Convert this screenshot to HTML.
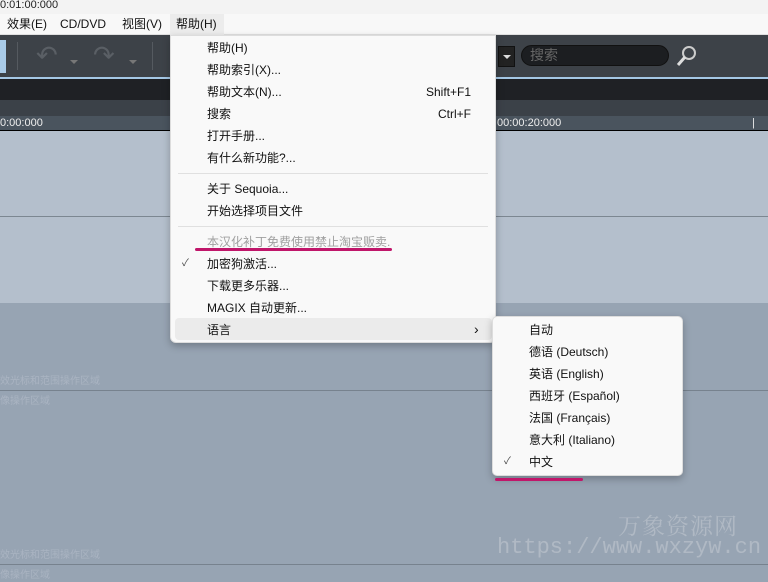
<!DOCTYPE html>
<html><head><meta charset="utf-8"><style>
*{margin:0;padding:0;box-sizing:border-box}
body{width:768px;height:582px;overflow:hidden;position:relative;font-family:"Liberation Sans","Noto Sans CJK SC",sans-serif;font-size:12px;background:#97a4b3;color:#111}
.a{position:absolute}
.mi{position:absolute;left:207px;font-size:12px;line-height:22px;top:0}
.sc{position:absolute;right:24px}
.si{position:absolute;left:529px;font-size:12px;line-height:22px}
.lbl{color:#aab4c2;font-size:10px}
</style></head><body>
<div class="a" style="left:0;top:0;width:768px;height:14px;background:#f3f3f3;font-size:11px;line-height:10px;color:#222">0:01:00:000</div>
<div class="a" style="left:0;top:14px;width:768px;height:21px;background:#f8f8f8;border-bottom:1px solid #e0e0e0"></div>
<div class="a" style="left:7px;top:16px;line-height:17px">效果(E)</div>
<div class="a" style="left:60px;top:16px;line-height:17px">CD/DVD</div>
<div class="a" style="left:122px;top:16px;line-height:17px">视图(V)</div>
<div class="a" style="left:170px;top:14px;width:54px;height:21px;background:#ececec"></div>
<div class="a" style="left:176px;top:16px;line-height:17px">帮助(H)</div>
<div class="a" style="left:0;top:35px;width:768px;height:42px;background:#3d4248"></div>
<div class="a" style="left:0;top:40px;width:6px;height:33px;background:#a9cbe8"></div>
<div class="a" style="left:17px;top:42px;width:1px;height:28px;background:#555a60"></div>
<div class="a" style="left:152px;top:42px;width:1px;height:28px;background:#555a60"></div>
<div class="a" style="left:36px;top:40px;font-size:26px;color:#5a5f65;line-height:30px">↶</div>
<div class="a" style="left:93px;top:40px;font-size:26px;color:#5a5f65;line-height:30px">↷</div>
<div class="a" style="left:70px;top:60px;border:4px solid transparent;border-top-color:#777"></div>
<div class="a" style="left:129px;top:60px;border:4px solid transparent;border-top-color:#777"></div>
<div class="a" style="left:498px;top:46px;width:17px;height:21px;background:#222;border:1px solid #111"></div>
<div class="a" style="left:503px;top:55px;border:4px solid transparent;border-top-color:#ddd"></div>
<div class="a" style="left:521px;top:45px;width:148px;height:21px;background:#1c1e21;border-radius:11px;border:1px solid #111;color:#666;font-size:14px;line-height:19px;padding-left:8px">搜索</div>
<svg class="a" style="left:675px;top:44px" width="24" height="24"><circle cx="14" cy="9" r="6" fill="none" stroke="#ccc" stroke-width="2"/><line x1="10" y1="13" x2="3" y2="21" stroke="#ddd" stroke-width="3"/></svg>
<div class="a" style="left:0;top:77px;width:768px;height:2px;background:#a5c8e6"></div>
<div class="a" style="left:0;top:79px;width:768px;height:21px;background:#1f2125"></div>
<div class="a" style="left:0;top:100px;width:768px;height:16px;background:#3b4148"></div>
<div class="a" style="left:0;top:116px;width:768px;height:14px;background:#4a545e"></div>
<div class="a" style="left:0;top:116px;color:#eee;font-size:11px;line-height:14px">0:00:000</div>
<div class="a" style="left:497px;top:116px;color:#eee;font-size:11px;line-height:14px">00:00:20:000</div>
<div class="a" style="left:752px;top:116px;color:#eee;font-size:11px;line-height:14px">| 00</div>
<div class="a" style="left:0;top:130px;width:768px;height:1px;background:#000"></div>
<div class="a" style="left:0;top:131px;width:768px;height:172px;background:#b4bfcc"></div>
<div class="a" style="left:0;top:216px;width:768px;height:1px;background:#7c8791"></div>
<div class="a" style="left:0;top:390px;width:768px;height:1px;background:#77828e"></div>
<div class="a" style="left:0;top:564px;width:768px;height:1px;background:#77828e"></div>
<div class="a lbl" style="left:0;top:372px">效光标和范围操作区域</div>
<div class="a lbl" style="left:0;top:392px">像操作区域</div>
<div class="a lbl" style="left:0;top:546px">效光标和范围操作区域</div>
<div class="a lbl" style="left:0;top:566px">像操作区域</div>
<div class="a" style="left:618px;top:508px;font-size:23px;color:#b0b9c4;font-family:'Noto Serif CJK SC',serif;letter-spacing:1px">万象资源网</div>
<div class="a" style="left:497px;top:535px;font-size:22px;color:#b0b9c4;font-family:'Liberation Mono',monospace">https://www.wxzyw.cn</div>
<div class="a" style="left:170px;top:35px;width:326px;height:308px;background:#f9f9f9;border:1px solid #ddd;border-radius:0 0 6px 6px;box-shadow:0 3px 8px rgba(0,0,0,.25)"></div>
<div class="mi" style="top:37px">帮助(H)</div>
<div class="mi" style="top:59px">帮助索引(X)...</div>
<div class="mi" style="top:81px;width:264px">帮助文本(N)...<span class="sc" style="right:0">Shift+F1</span></div>
<div class="mi" style="top:103px;width:264px">搜索<span class="sc" style="right:0">Ctrl+F</span></div>
<div class="mi" style="top:125px">打开手册...</div>
<div class="mi" style="top:147px">有什么新功能?...</div>
<div class="a" style="left:178px;top:173px;width:310px;height:1px;background:#e0e0e0"></div>
<div class="mi" style="top:178px">关于 Sequoia...</div>
<div class="mi" style="top:200px">开始选择项目文件</div>
<div class="a" style="left:178px;top:226px;width:310px;height:1px;background:#e0e0e0"></div>
<div class="mi" style="top:231px;color:#a0a0a0">本汉化补丁免费使用禁止淘宝贩卖.</div>
<div class="a" style="left:195px;top:248px;width:197px;height:3px;background:#c0166a;border-radius:2px"></div>
<div class="a" style="left:182px;top:253px;line-height:22px;font-size:10px;color:#444">✓</div>
<div class="mi" style="top:253px">加密狗激活...</div>
<div class="mi" style="top:275px">下载更多乐器...</div>
<div class="mi" style="top:297px">MAGIX 自动更新...</div>
<div class="a" style="left:175px;top:318px;width:317px;height:22px;background:#ebebeb;border-radius:4px"></div>
<div class="mi" style="top:319px">语言</div>
<div class="a" style="left:474px;top:318px;line-height:22px;font-size:14px">›</div>
<div class="a" style="left:492px;top:316px;width:191px;height:160px;background:#f9f9f9;border:1px solid #ddd;border-radius:5px;box-shadow:0 3px 8px rgba(0,0,0,.25)"></div>
<div class="si" style="top:319px">自动</div>
<div class="si" style="top:341px">德语 (Deutsch)</div>
<div class="si" style="top:363px">英语 (English)</div>
<div class="si" style="top:385px">西班牙 (Español)</div>
<div class="si" style="top:407px">法国 (Français)</div>
<div class="si" style="top:429px">意大利 (Italiano)</div>
<div class="a" style="left:504px;top:451px;line-height:22px;font-size:10px;color:#444">✓</div>
<div class="si" style="top:451px">中文</div>
<div class="a" style="left:495px;top:478px;width:88px;height:3px;background:#c0166a;border-radius:2px"></div>
</body></html>
